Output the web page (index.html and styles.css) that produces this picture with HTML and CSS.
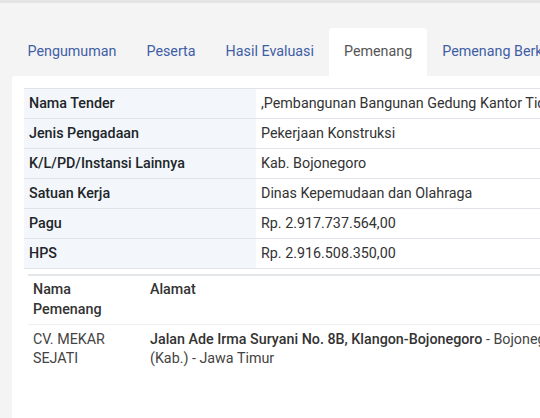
FILE: index.html
```html
<!DOCTYPE html>
<html lang="id">
<head>
<meta charset="utf-8">
<title>Pemenang</title>
<link rel="stylesheet" href="styles.css">
</head>
<body>
<div class="page">
  <ul class="tabs">
    <li class="tab"><a href="#">Pengumuman</a></li>
    <li class="tab"><a href="#">Peserta</a></li>
    <li class="tab"><a href="#">Hasil Evaluasi</a></li>
    <li class="tab active"><a href="#">Pemenang</a></li>
    <li class="tab"><a href="#">Pemenang Berkontrak</a></li>
  </ul>
  <div class="card">
    <table class="info">
      <tr><th>Nama Tender</th><td>,Pembangunan Bangunan Gedung Kantor Tidak Sederhana</td></tr>
      <tr><th>Jenis Pengadaan</th><td>Pekerjaan Konstruksi</td></tr>
      <tr><th>K/L/PD/Instansi Lainnya</th><td>Kab. Bojonegoro</td></tr>
      <tr><th>Satuan Kerja</th><td>Dinas Kepemudaan dan Olahraga</td></tr>
      <tr><th>Pagu</th><td>Rp. 2.917.737.564,00</td></tr>
      <tr><th>HPS</th><td>Rp. 2.916.508.350,00</td></tr>
    </table>
    <table class="winners">
      <thead>
        <tr><th class="c-name">Nama Pemenang</th><th class="c-addr">Alamat</th></tr>
      </thead>
      <tbody>
        <tr><td class="c-name">CV. MEKAR SEJATI</td><td class="c-addr"><b>Jalan Ade Irma Suryani No. 8B, Klangon-Bojonegoro</b> - Bojonegoro (Kab.) - Jawa Timur</td></tr>
      </tbody>
    </table>
  </div>
</div>
</body>
</html>
```
FILE: styles.css
```css
html, body {
  margin: 0;
  padding: 0;
  overflow: hidden;
}
body {
  background: #f4f4f4;
  border-top: 3px solid #e4e4e4;
  font-family: Roboto, "Liberation Sans", sans-serif;
  font-size: 14.3px;
  color: #212529;
}
.page {
  width: 740px;
}
.tabs {
  list-style: none;
  margin: 25px 0 0 0;
  padding: 0 0 0 12px;
  display: flex;
}
.tab a {
  display: block;
  padding: 13px 15px 15px;
  line-height: 20px;
  color: #3f5ea6;
  text-decoration: none;
  white-space: nowrap;
}
.tab:first-child a {
  padding-left: 15.5px;
}
.tab.active a {
  background: #fff;
  color: #555;
  border-radius: 4px 4px 0 0;
}
.card {
  margin-left: 12px;
  background: #fff;
  padding: 12px;
  min-height: 400px;
  border-radius: 3px;
}
table {
  border-collapse: collapse;
}
.info {
  width: 100%;
}
.info th, .info td {
  text-align: left;
  padding: 4px 5px 4px;
  line-height: 21px;
  border-top: 1px solid #e0e4e8;
  border-bottom: 1px solid #e0e4e8;
  white-space: nowrap;
}
.info th {
  width: 222px;
  background: #f3f7fb;
  font-weight: 500;
  color: #212529;
}
.info td {
  color: #333;
}
.winners {
  margin: 5px 0 0 4px;
  width: 562px;
}
.winners th, .winners td {
  text-align: left;
  vertical-align: top;
  line-height: 20px;
}
.winners thead th {
  padding: 3px 5px 5px;
  border-top: 2px solid #e4e7ea;
  font-weight: 500;
  color: #333;
}
.winners tbody td {
  padding: 5px 5px 4px;
  line-height: 19px;
  border-top: 1px solid #eceef0;
  color: #444;
}
.winners .c-name {
  width: 107px;
}
.winners b {
  font-weight: 500;
  color: #333;
}
```
